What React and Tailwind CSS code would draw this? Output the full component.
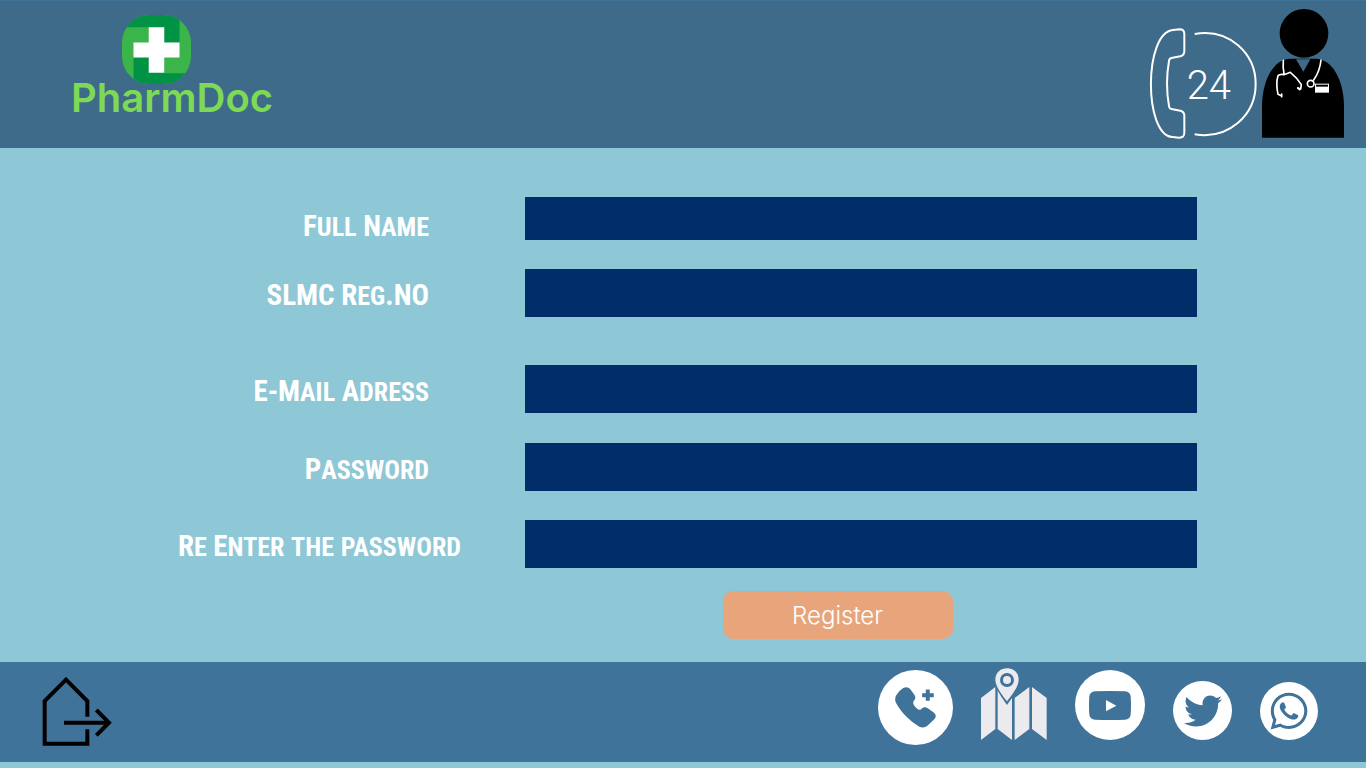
import { FaTwitter, FaWhatsapp } from "react-icons/fa";

function Logo() {
  return (
    <a href="#" className="flex flex-col items-start">
      <svg className="ml-[51px] h-[69px] w-[69px]" viewBox="0 0 204 204" aria-hidden="true">
        <defs>
          <clipPath id="badge">
            <rect width="204" height="204" rx="82" />
          </clipPath>
        </defs>
        <g clipPath="url(#badge)">
          <rect width="204" height="204" fill="#3bb54a" />
          <path d="M0 0H170V82H80V36H0Z" fill="#009245" />
          <path d="M34 120H125V172H204V204H34Z" fill="#009245" />
        </g>
        <path d="M79 36H125V81H170V126H125V171H79V126H34V81H79Z" fill="#fff" />
      </svg>
      <span className="-mt-2 font-['Inter',sans-serif] text-[40px] leading-[44px] font-semibold text-[#7ed957]">
        PharmDoc
      </span>
    </a>
  );
}

function HotlineIcon() {
  return (
    <svg className="h-[112px] w-[108px]" viewBox="28 84 324 336" fill="none" stroke="#fff" strokeWidth="6" role="img" aria-label="24 hour hotline">
      <path d="M100 90L120 88Q134 88 134 102V154Q134 166 122 169L95 174Q89 175 88 183Q76 250 88 318Q89 326 95 327L122 332Q134 335 134 347V398Q134 414 118 413L98 411C12 405 12 98 100 90Z" />
      <path d="M165 102C268 84 348 160 348 252C348 344 268 420 165 403" />
      <text x="141" y="297" fill="#fff" stroke="none" fontSize="120" fontWeight="300" fontFamily="Roboto, sans-serif">24</text>
    </svg>
  );
}

function DoctorIcon() {
  return (
    <svg className="h-[129px] w-[82px]" viewBox="366 28 246 387" role="img" aria-label="Doctor">
      <circle cx="492" cy="101" r="73" />
      <path d="M366 414V315C368 242 400 177 452 177H526C578 177 610 242 612 315V414Z" />
      <path d="M468 179H511L490 216Z" fill="#3e6b89" />
      <g fill="none" stroke="#fff" strokeWidth="5" strokeLinecap="round" strokeLinejoin="round">
        <path d="M430 182Q428 200 432 222M424 288L414 284Q407 250 414 228Q420 222 432 225L451 218Q472 235 484 255L482 268L474 265M543 181Q540 214 521 241" />
        <circle cx="512" cy="252" r="10" />
        <path d="M425 283V291M473 265L479 270" />
      </g>
      <path d="M525 252H567V279H525Z" fill="#fff" />
      <path d="M528 255H564V261H528Z" />
    </svg>
  );
}

/* Lower-case letters are shown as slightly smaller capitals. */
function SmallCaps({ text }) {
  return text.split(/([a-z]+)/).map((run, i) =>
    /^[a-z]/.test(run) ? (
      <span key={i} className="text-[26px] uppercase">{run}</span>
    ) : (
      run
    )
  );
}

const fields = [
  { id: "fullName", label: "Full Name", type: "text", row: "", labelBox: "pr-24 pt-4", box: "h-[43px]" },
  { id: "slmc", label: "SLMC Reg.NO", type: "text", row: "mt-[29px]", labelBox: "pr-24 pt-1", box: "h-12" },
  { id: "email", label: "E-Mail Adress", type: "email", row: "mt-12", labelBox: "pr-24 pt-1", box: "h-12" },
  { id: "password", label: "Password", type: "password", row: "mt-[30px]", labelBox: "pr-24 pt-1", box: "h-12" },
  { id: "confirm", label: "Re Enter the password", type: "password", row: "mt-[29px]", labelBox: "pr-16 pt-1", box: "h-12" },
];

function Field({ id, label, type, row, labelBox, box }) {
  return (
    <div className={`grid grid-cols-[525px_1fr] items-center ${row}`}>
      <label htmlFor={id} className={`text-right font-['Roboto_Condensed','Liberation_Sans_Narrow','Liberation_Sans',sans-serif] text-[29px] leading-[24px] font-bold whitespace-nowrap text-white ${labelBox}`}>
        <SmallCaps text={label} />
      </label>
      <input id={id} name={id} type={type} className={`w-full bg-[#012e68] px-4 text-xl text-white outline-none ${box}`} />
    </div>
  );
}

function Round({ label, size, children }) {
  return (
    <a href="#" aria-label={label} className={`flex items-center justify-center rounded-full bg-white text-[#40739a] ${size}`}>
      {children}
    </a>
  );
}

export default function App() {
  return (
    <div className="flex min-h-screen flex-col bg-[#8ec7d6] pb-[6px]">
      <header className="flex h-[148px] items-start justify-between border-t border-[#40739a] bg-[#3e6b89] pr-[22px] pl-[71px]">
        <div className="pt-[14px]">
          <Logo />
        </div>
        <div className="flex items-end gap-[5px] pt-2">
          <div className="-mb-0.5">
            <HotlineIcon />
          </div>
          <DoctorIcon />
        </div>
      </header>

      <main className="grow">
        <form className="pt-[49px] pr-[169px]" onSubmit={(e) => e.preventDefault()}>
          {fields.map((f) => (
            <Field key={f.id} {...f} />
          ))}
          <div className="mt-[23px] flex justify-center pl-[478px]">
            <button type="submit" className="h-12 w-[230px] rounded-[10px] bg-[#e8a57c] pt-0.5 font-['Inter',sans-serif] text-2xl font-light text-white">
              Register
            </button>
          </div>
        </form>
      </main>

      <footer className="flex h-[100px] items-end justify-between bg-[#40739a] pr-12 pb-[22px] pl-[42px]">
        <a href="#" aria-label="Exit" className="-mb-[7px]">
          <svg className="h-[70px] w-[70px]" viewBox="36 67 210 210" fill="none" stroke="#000" strokeWidth="12">
            <path d="M172 186V139L108 75L44 139V267H172V224M102 204H236M199 166L237 204L199 242" />
          </svg>
        </a>
        <nav className="flex items-end gap-7">
          <Round label="Emergency call" size="-mb-[5px] h-[75px] w-[75px]">
            <svg className="h-[75px] w-[75px]" viewBox="35 46 226 226" fill="currentColor">
              <path d="M110 101Q123 94 132 103L145 121Q151 131 143 138Q138 148 147 157L153 163Q162 170 168 161Q176 156 185 161L204 175Q213 184 206 193L184 214Q173 223 158 216C130 199 106 176 89 145Q84 133 90 122Q97 109 110 101Z" />
              <path d="M179 105H191V116H203V128H191V139H179V128H168V116H179Z" />
            </svg>
          </Round>
          <a href="#" aria-label="Map">
            <svg className="h-[72px] w-[66px]" viewBox="348 39 198 216" fill="#ebebef">
              <path d="M348 129L391 96V222L348 255ZM398 98L441 129V255L398 222ZM449 129L493 96V222L449 255ZM501 96L545 129V255L501 222Z" />
              <path d="M426 150C414 132 389 101 389 75C389 26 463 26 463 75C463 101 438 132 426 150Z" fill="#40739a" />
              <path fillRule="evenodd" d="M426 139C415 124 391 96 391 74C391 28 461 28 461 74C461 96 437 124 426 139ZM426 54A21 21 0 1 0 426 96A21 21 0 1 0 426 54ZM426 63A12 12 0 1 1 426 87A12 12 0 1 1 426 63Z" />
            </svg>
          </a>
          <Round label="YouTube" size="h-[70px] w-[70px]">
            <svg className="h-[29px] w-[42px]" viewBox="0 0 126 87">
              <path d="M18 1Q63-1 108 1Q123 2 125 16Q127 43 125 71Q123 85 108 86Q63 88 18 86Q3 85 1 71Q-1 43 1 16Q3 2 18 1Z" fill="currentColor" />
              <path d="M51 27L82 44L51 61Z" fill="#fff" />
            </svg>
          </Round>
          <Round label="Twitter" size="h-[59px] w-[59px]">
            <FaTwitter className="h-[38px] w-[38px]" />
          </Round>
          <Round label="WhatsApp" size="h-[58px] w-[58px]">
            <FaWhatsapp className="h-[42px] w-[42px]" />
          </Round>
        </nav>
      </footer>
    </div>
  );
}
